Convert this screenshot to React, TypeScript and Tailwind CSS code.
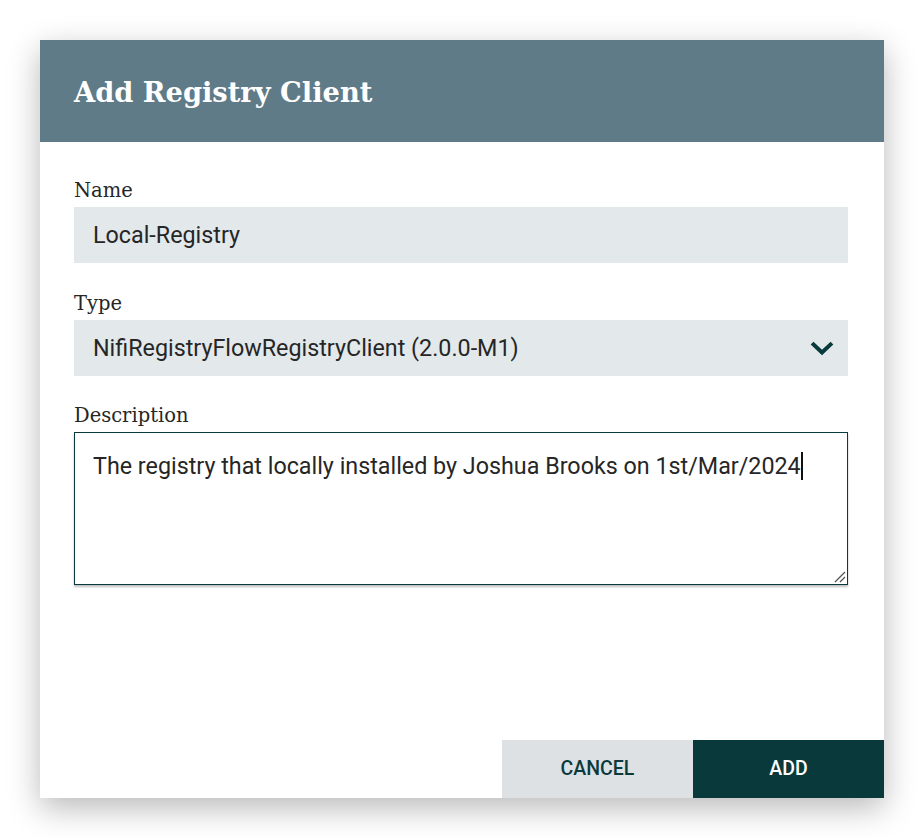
import React from "react";

const slab = { fontFamily: '"DejaVu Serif", "Liberation Serif", serif' };

export default function App() {
  return (
    <div className="w-[924px] h-[838px] bg-white p-[40px]" style={{ fontFamily: 'Roboto, "Liberation Sans", sans-serif' }}>
      <div className="w-[844px] h-[758px] flex flex-col bg-white shadow-[0_10px_30px_rgba(0,0,0,0.28)]">
        <div className="h-[102px] bg-[#607b88] flex items-center px-[34px] pt-[3px]">
          <h1 className="text-white text-[27.3px] font-bold" style={slab}>
            Add Registry Client
          </h1>
        </div>
        <div className="flex-1 flex flex-col px-[34px] pr-[36px] pt-[37px]">
          <div className="h-[24px] leading-[24px] text-[19.5px] text-[#262626] mb-[4px]" style={slab}>Name</div>
          <div className="h-[56px] bg-[#e3e8eb] flex items-center px-[19px] pt-[1px] text-[23.3px] text-[#262626]">
            Local-Registry
          </div>
          <div className="h-[24px] leading-[24px] text-[19.5px] text-[#262626] mt-[29px] mb-[4px]" style={slab}>Type</div>
          <div className="h-[56px] bg-[#e3e8eb] flex items-center justify-between pl-[19px] pr-[14px] pt-[1px] text-[23.3px] text-[#262626]">
            <span>NifiRegistryFlowRegistryClient (2.0.0-M1)</span>
            <svg width="24" height="24" viewBox="0 0 24 24">
              <path d="M3.5 7.5 L12 15.5 L20.5 7.5" fill="none" stroke="#0b3a3d" strokeWidth="4" strokeLinecap="square" />
            </svg>
          </div>
          <div className="h-[24px] leading-[24px] text-[19.5px] text-[#262626] mt-[28px] mb-[4px]" style={slab}>Description</div>
          <div className="relative h-[153px] border border-[#0b3a3d] shadow-[0_2px_2px_rgba(0,0,0,0.25)] px-[18px] pt-[19px] text-[23.3px] leading-[28px] text-[#262626]">
            <span>The registry that locally installed by Joshua Brooks on 1st/Mar/2024</span>
            <span className="inline-block w-[2px] h-[28px] bg-[#111] align-top" />
            <svg className="absolute right-[1px] bottom-[1px]" width="14" height="14" viewBox="0 0 14 14">
              <path d="M13 3 L3 13 M13 8 L8 13" stroke="#555" strokeWidth="1.3" />
            </svg>
          </div>
          <div className="flex-1" />
        </div>
        <div className="flex justify-end">
          <button className="w-[191px] h-[58px] bg-[#dde1e4] text-[#0b3a3d] text-[19.5px] font-medium">
            CANCEL
          </button>
          <button className="w-[191px] h-[58px] bg-[#0a393c] text-white text-[19.5px] font-medium">
            ADD
          </button>
        </div>
      </div>
    </div>
  );
}
